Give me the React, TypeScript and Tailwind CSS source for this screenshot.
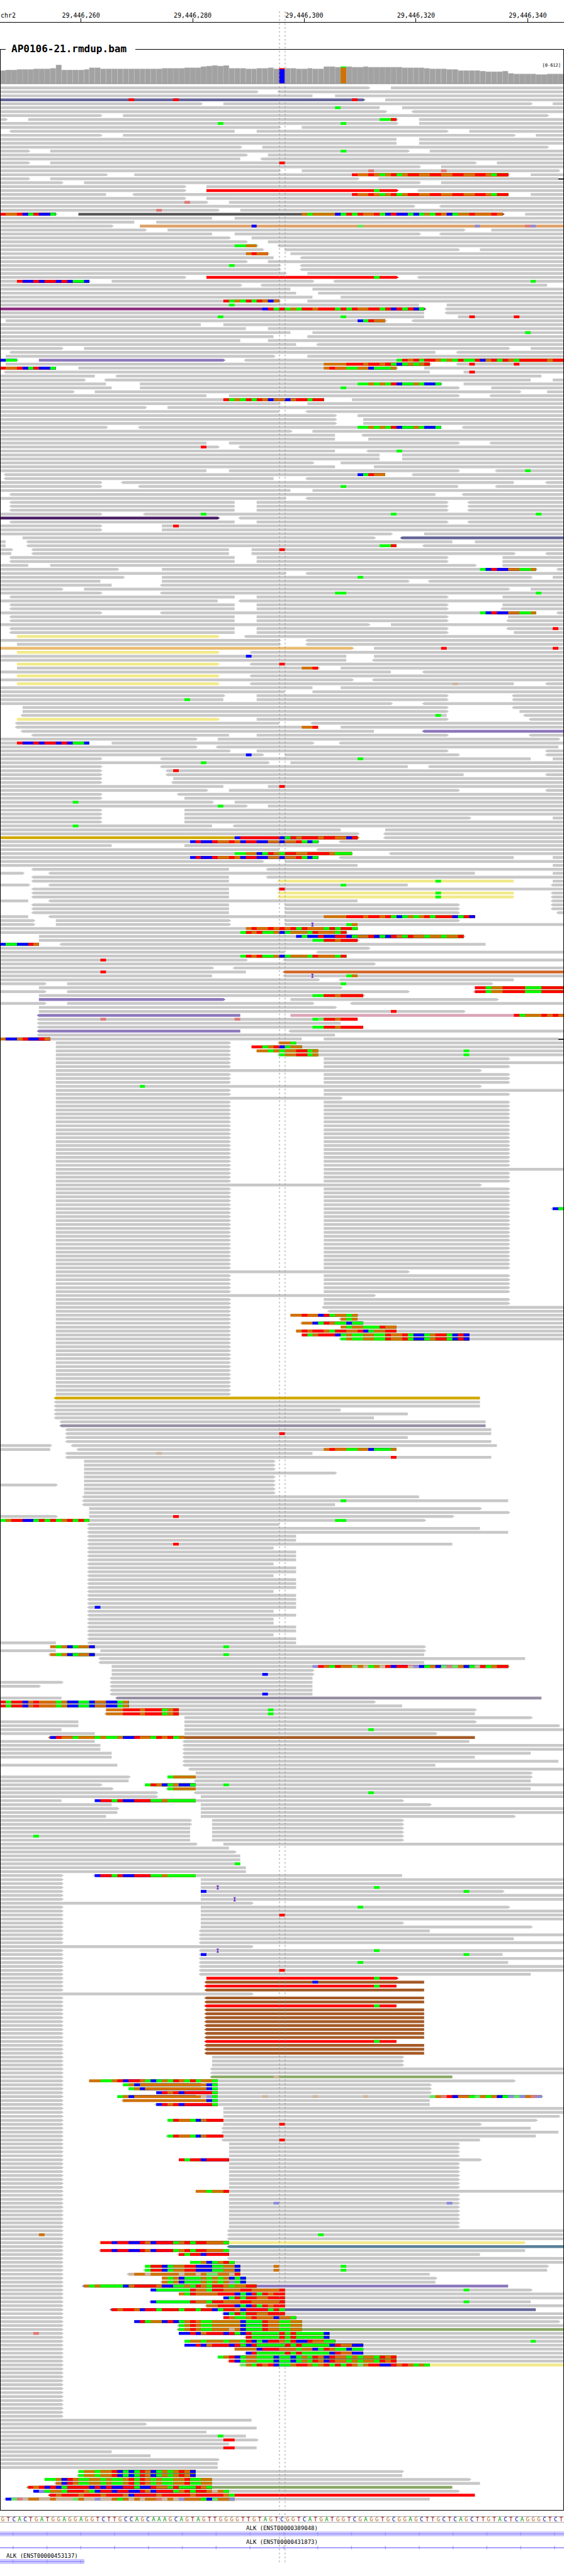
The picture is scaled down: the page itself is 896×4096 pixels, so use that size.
import React from "react";

const COLUMNS = 101;
const VIEW_WIDTH = 1000;
const CELL = VIEW_WIDTH / COLUMNS;
const ROW_PITCH = 7;
const ROW_HEIGHT = 5;
const FIRST_ROW_Y = 154;

const at = (col: number) =>
  Math.min(Math.max(Math.round(col * CELL), 1.2), VIEW_WIDTH - 1.2);

/*
 * One line per alignment row. A line may start with "N*" to repeat it.
 *   <a-b>X   read from column a to b, arrow marks for strand, X = colour key
 *   12rgbo   mismatching bases from column 12 on (capitals: low quality)
 *   i12      insertion before column 12
 *   d12      deletion at column 12
 */
const PILEUP = `
-66> 70-
-46> <50-
-56 60-
-65>S 23r 31r 63r 69-
-36> 40-95> 99-
-68 60g 72-
-69> <74-
-18> 22-98>
-1> 5-71> 68ggr 75-
-71> 39g 61g 75-
-50> 54-
<2-42 46-80> 84-
-18> 22-92> 96-
2* -71 75-
-43> 47-98>
-5> 9-73> 61g 77-
-44> 48-
-43 <47-
-5> 9-85> 50r 89-
-75> 79-
-50> 54-100> 66R 79R
-19> 24-91> 63roorogorgorroorroorroorrogrr 95-
-5> 9-64> <68-100 d100
-11> 15-75> 79-
-33> 37-
-33> 37-71>R 67g <75-
-19 <24-91 63roorogorgorroorroorroorrogrr 95-
-33> 37-
-37> 33R 41-
-74> <79-
-39> 28R 43-
-10> 0roorbgrbbg 14-90>K 54ogoooobgrgroorgbrbbgbgogrobgooroooro 94-
-38 42-
-24 28-
-20> 25-T 45b 64G 85B 94R 95B
-26> 30-83> 88-
-38 42-75> <79-
-41> 45-
-44> 48-
-46> 42ggoo <50-
-47> 51-82> 86-
-48> 44oroo 52-
-49 <54-
-44> 48-
-50> 41g <54-
-50> <54-
-51> 55-
-33> 37-71>R 67g <75-
-16> 3rbbrbrrbrbggb 20-56> <60- 95g
-43> <47-98
-52 56-
-53 57-
-56 61-
-50> 40rgogrgrobo 55-
-75 41g 80-
-76>P 47brgrgogrrorrrgrgroorrgrbrgrbg <80-
-76 <80-
-76 39g 61g 82- 84r 92r
1-69> 64bgroo <74-
-36 40-
-44 48-
-52 56- 94g
-49 55-
-43 48-
-53 <57-
-11> 15-91> 95-
<2-78 <82-
1-49> 55-
-3> 0bgg 7-40>V <44- 71grorgrrogogrggrborgrogrrrrrorr
1-77> 58oooorrrorrorgbgogor <82- 84r 92r
-10 0roorbgrbbg 14-71> 58orooggoobgggo 76-
<1-77 83- 84r
-17 <21-97
-15> <19-95 99-
-19 25-79> 64ggogogrbggogbbg 83-
-20 25-82> 61g 88-
-13> 17-93> 98-
-37 41-82> <88-
-58 40rgogrgrobooborrgrr 63-
-50> 55-
-26> 30-
-50 <55-
-60> 64-
2* -60> 65-
-19> <25-79 64ggogogrbggogbbg <83-
-52> 56-
-60 <65-
-60 66-
-37 41-82> <88-
-39> 36r <43-
-60 <66- 71g
2* -68 72-
-56> 61-
-60 67-
-37 41-82> <89- 94g
<1-69 64bgroo <74-
<1-49 <55-
-18> <22-92 <98-
-18> <25-82 61g <89-
-52 56-
<2-78 <83-
-51> <55-
3* <2-42 46-80> <84-
-18> <26- 36g 70g 96g
-39>D <43-
<2-42 46-80> <84-
-18> 29- 31r
-18> 29-
-70> 76-
4-67> <72-S
-1 <5-81 85-
-1 <5-71 68ggr <76-
-2> <6-41 45- 50r
-2 <6-41 45-92> <98-
2* <2-42 46-80> 90-
-5 9-85> 90-
-21> 29-96> 86gbrbbooggo <100-
-51> <55-
-22> 29-95> 64g 99-
-18 29-73> <77-
-20 <29-
-11> 15-91> 95-
-18> <29- 60gg 96g
<2-42 46-80> 90-
-39 <43-
<2-42 46-80> 90-
<2-42 46-80> <90-
-18> <29-96 86gbrbbooggo <100-
<2-42 46-80> 91-
<2-42 46-80> <91-
-66> 70-
<2-42 46-80> <91- 99r
<2-42 46-80> 92-
3-39>Y <44-
-50> <55-
3-50> <55-
-63>L 67- 79r 99r
3-39>Y <45-
-62 44b 67-
-62 <67-
3-39>Y <45- 50r
3-57> 54oor 61-
-70 <76-
3-39>Y <45-
-63> <67-
3-39>Y <45-92 81O <98-
-56 61-
-51 56-
-40> 46-80> <92-
-40 33g 46-80> <92-
-70> <76-
4-80> <92-
4-80> 93-
<4-80 78g <94-
3-39>Y 46-80> <95-
<3-50 <56-
<3-57 54oor 61-
<4-67 <76-V
<6-41 46-80> <95-
-35> 39-100>
-16 3rbbrbrrbrbggb 20-56> <61-
-35> <39-100
-41> 46-80> <98-
-47> 44b 51-82> <98-
-18> <29-95 64g 99-
-48> 36g 52-
-18> <29-73 <77-
-18> <30- 31r
-18> <30-83 <98-
-18> 31-
-18> <31-
-40 48- 50r
-37> 41-82> <98-
-18> <32-
-18> 33-
-38> 13g 42-
-44> 39g 48-
2* -18> 33-
-18> 33-84> 99-
-18> 33-
-38 13g <42-
-61 69-
-64> <69-
-64>N 42brrrrrrrbgrorrrorroobr <69-
-57> 34brbbroorobrrbbooboorgbg <61-
-20 33-
-50 <57-
-63 42ggoobgrogrroorrrroggg <70-
-57 34brbbroorobrrbbooboorgbg <61-92 99-
-47> 51-
-64 99-
<6-41 <48-
-4> <9-85 99-
<6-41 <48-
<6-41 <50-92Y 78g 99-
-5> <9-73 61g <99-
<6-41 <50- 50r
2* <6-41 <50-92Y 78g <99-
-5 <9-64 <99-
2* <6-41 51-82> <99-
<6-41 51-82> <100-
-5 <9-85 58oooorrrorrorgbgogorgrrrbgrb
-6> 10-41> 51-82>
-6> 10-41> 51- i56 62go
-64 44oroorororgrooogrgrrg
-62> 43grorggobgooogrooogr
7-83> 53bgbbrbbrrbgoorbgbrogroogoogoor
7-64> 56ggrrorrr
-7 0bggbbro <11-87
-66>
-51 <57-
-62 43grorggobgooogrooogr
-44> 18r <51-
-67>
-38> <42-
-44 18r <51-C
-38 <51- i56 62go
-57> <61-92
-8> 12-88> 61g
7-61> 85- 85rrgoorrrrgggrrrr
-8> 12-73> <85- 85rrgoorrrrgggrrrr
7-65> 56ggrrorrrr
7-40>V 52-89>
-8> 12-56> <63-
7-60>
7-83> 70r
<7-43V 52-I 92rgooororo
<7-64 18R 42R 56gGrrorrr
<7-61
<7-65 56ggrrorrrr
<7-43V <52-
<7-60
-54 0obborbbro 58-100 d100
10-41> <50- 50oog
10-41> 45- 45rrgorbgoo
10-41> 46- 46oogogoorrgo 83g
10-41> <50- 50goorrgo 83g
10-41> 58-91>
10-41> 58-
10-41> 58-91>
10-86>
3* 10-41> 58-91>
10-86> 25g
10-41> 58-
10-41> 58-91>
10-61>
17* 10-41> 58-91>
10-41> 58-
3* 10-41> 58-91>
10-86>
5* 10-41> 58-91>
10-41> 58-91> <99- 99bg
15* 10-41> 58-91>
10-73>
5* 10-41> 58-91>
10-67>
2* 10-41> 58-91>
10-41> <58-
10-41> <59-
10-41> 52- 52ooroobrgoogo
10-41> <61- 61ogo
10-41> <54- 54oobgroggbgg
10-41> 61- 61ogoogggroo
10-41> 53- 53ororrogrroorbgoorr
10-41> 54- 54rgorrrbgoggooggroorgbbgorrgbrb
10-41> <61- 61goggooggroorgbbgorrgbrb
14* 10-41>
<10-86N
2* <10-86
<10-61
<10-73
<10-67
<11-87
<11-87M
<12-88
<12-88 50r
<12-73
<12-88
-9> <13-89
-9 <14-71 58orooggoobgggo
<12-56 28O
<12-88 70r
3* 15-49>
15-60>
2* 15-49>
-10> 15-49>
2* 15-49>
<15-75
<15-91 61g
<15-60
16-86>
16-91>
-10> 16-81> 31r
-76> 0gorrbbgrgrgorgrg 60gg
<16-50
<16-86
<16-91
2* <16-53
<16-81 31r
<16-49
3* <16-53
<16-49
2* <16-53
<16-49
3* <16-53
<16-49
3* <16-53
<16-53 17b
<16-49
<16-53
2* <16-49
2* <16-53
<16-49
<16-53
-10 <16-53
9-76> 9ogobgoob 40g
-10 18-76>
<9-76 9ogobgoob 40g
<18-94
<18-76
20-91> 56BrogrooGoOgoOrbrrOBbgobGRGobgOrgorr
20-56>
20-56> 47b
<20-56
-11> <20-56
-7> <20-56
<20-56
<20-56 47b
-11 <21-97M
-67> 0rgrrborooogobbggboobbgo
-72 0rgrrborooogobbggboobbgo
19-85> 19ooorrrorrrgor 48g
<19-85 19ooorrrorrrgor 48g
33-95>
-14 33-85>
-14 33-100>
-11 33- 66g
-17 33-78>
<9-85W 9broogooogoggobbroogrorgo
-17 <33-84
2* -18 <33-
-20 <33-95
-20 <33-85
<33-100
-21 <33-78
<34-
35-95>
-23> 30-95> 30goooo
-23 <35-95
-18> 26- 26grobgobbg 40g
-20> <30-95 30goooo
-28> <35- 66g
-28> 36-
-11 17-72> 17brrgrbbrrrggoggggg
-20 36-77>
-21> 36-
-21 36-
-19 36-92>
2* -34> 38-72>
2* -34 38-72>
-34 6g 38-72>
-34 38-72>
-35> 40-
-41
-42>
2* -43
-43 42g
2* -44
-11> <17-72 17brrgrbbrrrggoggggg
2* -11> 36-
-11> 36- i39 67g
-11> 36-90> 36b 83g
-11> 36-
-11> 36- i42
-45>
-11> 36-91> 64g
-11> 36-
-11> 36- 50r
-11> 36-
-11> 36-72>
-11> 36-95>
-11> <36-77
-11> <36-
-11> <36-92
-11> <36-
-45>
-11> <36- i39 67g
-11> <36-90 36b 83g
-11> <36-
-11> <36-91 64g
-11> <36-
-11> <36- 50r
-11> <36-95
-11> 37-71>R 67g
-11> <37-76W 56b
-11> <37-71R 67g
-11> <37-76W
-45>
2* -11> <37-76W
-11> <37-71R 67g
8* -11> <37-76W
-11> <37-71R 67g
3* -11> <37-76W
3* -11> 38-72>
2* -11> <38-
-11> <38-81E 49O
-11> 16-92> 16ooggorbrrogbgogrogrgoog
-11> 22-77> 22gobooooooooooo 36obg
-11> 23-77> 23gobooooooooooo 37bg
-11> 28-77> 28brorbrrrrrg
-11> 21-97> 21gobooooooooooo 35oOBg 47O 56O 65O 77GoRrboogGogobgBGBoRB
-11> <22-77 22ooooooooooooooobg
-11> <28-77 28brorbrrrrrg
2* -11> 40-
-11> 40-100>
-11> 30-96> 30groogborrr
-11> 40-86> 50r
-11> <40-95
-11> <40-100
-11> <30-96 30groogborrr
-11> <40-86 50r
4* -11> 41-82>
-11> 32-86> 32rgrrbrrrr
7* -11> 41-82>
-11> 35- 35oogoor
2* -11> 41-82>
-11> 41-82> 49B 80B
6* -11> 41-82>
-11> <41-
-11> 7o <41- 57g
-11> <41-
-11> <18-94Y 18rrbrrbbrobrrrgorgrrooog
-11> <41-Z
-11> <18-94 18rrbrrbbrobrrrgorgrrooog
-11> <32-86 32rgrrbrrrr
-11> <41-
-11> 34- 34ggobgorg
-11> 26-98> 26grrbgoorrbbbggoob 49o 61g
-11> <26-98 26grrbgoorrbbbggoob 49o 61g
-11> <23-77 23OooOoooooOooOoGGooOr
-11> 29-78> 29ogobgggogogobgb
-11> <29-78 29ogobgggogogoBgb
-11> <15-91V 15ogoggggborrrrobbggogrogrrogoorr
-11> 27-95> 27bggggggroogrrooorrooooor 83g
-11> 32- 32ogroooorrrbgbrgrorr
-11> 40- 40bgrgrroorrr
-11> <27-95 27bggggggroogrrooorrooooor 83g
-11> <37- 37oorrrbgbrgrorr
-11> <20-96S 20rorrobrrgrrrgrrgrrbgrrobrrrrgrg
-11> <40- 40bgrgrroorrr
-11> 40- 40roggoroooboog
-11> 24-100> 24brgoobrbgoroggooooobgggrooggoo
-11> <32- 32goroggooooobgggrooggoo
-11> <32-E 32goroggoooOobgggrooggoo
-11> 6R 32- 32bbrborrrbrgbrgggggrgrgggggb
-11> <44- 44rgggggrgrgggggb
-11> 33- 33googooogoogrbgbrrogrbbroogg 95g
-11> 33- 33bbrborrrbrgbrgggggrgrgggggbroobb
-11> 42- 42oooobrrrooogoobgroggbgg
-11> <44- 44brgggggrgrgggggbroobb
-11> 39- 39gorbgoogggbggbgogrobroogogoogror
-11> <41- 41rbgoogggbggbgogrobroogogoogror
-11> <43-Y 43GogrorbggorrogorgrgroGorrbbrorogog
13* -11>
-45
-26>
-46
-37
-44 39g
-46> 40rr
-41
-46 40rr
-20
-27
-39>
2* -39
14-72> 14googoorbgbgrobgogorob
<14-72 14googoorbgbgrobgogorob
8-84> 8ggobroggoogoggorgrogoggoorggoo
<10-86 10obroggoogoggorgrogoggoorggoo
<5-81E 5rorbrbgrrrrbrbrbbrrgbbroogrgggrog
6-82> 6bBgoogrrrogbrrbrrbbrobrrrgorgrroOog
<9-85R 9rorrrorrrorrrobrrrrorrrrrorrrrrog
<1-77 1bGROooOOoOOOGoOOBOOogoOoOooROoOBooogbGooB
`;

const READ_COLORS: Record<string, string> = {
  "": "#c8c8c8",
  S: "#646699",
  R: "#ff0000",
  K: "#555555",
  T: "#dda066",
  P: "#8f2d80",
  V: "#8c77bb",
  D: "#4b2066",
  Y: "#f2ea8a",
  L: "#e8bb72",
  N: "#d2a900",
  C: "#d16627",
  I: "#dba3b5",
  M: "#968ea3",
  W: "#a55a26",
  E: "#88a864",
  Z: "#5a809a",
};

const BASE_COLORS: Record<string, string> = {
  r: "#ff0000",
  g: "#00ff00",
  b: "#0000ff",
  o: "#d17105",
  R: "#e07878",
  G: "#64e664",
  B: "#8c8cdc",
  O: "#ccb6a0",
};

const rows: string[][] = PILEUP.trim()
  .split("\n")
  .flatMap((line) => {
    const m = line.match(/^(\d+)\* (.*)$/);
    const tokens = (m ? m[2] : line).split(" ");
    return Array.from({ length: m ? Number(m[1]) : 1 }, () => tokens);
  });

function Read({ token, y }: { token: string; y: number }) {
  const m = token.match(/^(<?)(\d*)-(\d*)(>?)([A-Z]?)$/);
  if (!m) return null;
  const x1 = at(m[2] === "" ? 0 : Number(m[2]));
  const x2 = at(m[3] === "" ? COLUMNS : Number(m[3]));
  const left = m[1] ? `L${x1 - 4} ${y + ROW_HEIGHT / 2}` : "";
  const right = m[4] ? `L${x2 + 4} ${y + ROW_HEIGHT / 2}` : "";
  const bottom = y + ROW_HEIGHT;
  return (
    <path
      d={`M${x1} ${y}H${x2}${right}L${x2} ${bottom}H${x1}${left}Z`}
      fill={READ_COLORS[m[5]]}
    />
  );
}

function Bases({ token, y }: { token: string; y: number }) {
  const m = token.match(/^(\d+)([a-zA-Z]+)$/);
  if (!m) return null;
  const start = Number(m[1]);
  const end = at(start + m[2].length);
  return (
    <>
      {m[2].split("").map((base, i, all) =>
        i > 0 && all[i - 1] === base ? null : (
          <rect
            key={i}
            x={at(start + i)}
            y={y}
            width={end - at(start + i)}
            height={ROW_HEIGHT}
            fill={BASE_COLORS[base]}
          />
        )
      )}
    </>
  );
}

function Mark({ token, y }: { token: string; y: number }) {
  const x = at(Number(token.slice(1)));
  if (token[0] === "d") {
    return <rect x={x} y={y + 2} width={10} height={2} fill="#000" />;
  }
  return (
    <path
      d={`M${x - 2} ${y - 1}h4v1.6h-1.2v3.8h1.2v1.6h-4v-1.6h1.2v-3.8h-1.2z`}
      fill="#6a22cc"
    />
  );
}

function Alignments() {
  return (
    <svg
      viewBox="0 150 1000 4302"
      preserveAspectRatio="none"
      className="block aspect-[1000/4304] w-full"
      role="img"
      aria-label="Read alignments"
    >
      {rows.map((tokens, i) => {
        const y = FIRST_ROW_Y + i * ROW_PITCH;
        return (
          <g key={i}>
            {tokens.map((t, k) => (t.includes("-") ? <Read key={k} token={t} y={y} /> : null))}
            {tokens.map((t, k) => (/^\d+[a-zA-Z]+$/.test(t) ? <Bases key={k} token={t} y={y} /> : null))}
            {tokens.map((t, k) => (/^[id]\d+$/.test(t) ? <Mark key={k} token={t} y={y} /> : null))}
          </g>
        );
      })}
    </svg>
  );
}

/* [number of columns, top of the bar] */
const COVERAGE_RUNS: [number, number][] = [
  [1, 125], [2, 124], [3, 123], [3, 122], [1, 121], [1, 115], [4, 124], [1, 123],
  [2, 120], [11, 122], [4, 121], [3, 120], [1, 118], [1, 117], [1, 116], [1, 117],
  [1, 116], [3, 121], [2, 122], [2, 121], [1, 120], [1, 122], [1, 121], [2, 121],
  [2, 122], [1, 121], [2, 122], [2, 118], [1, 119], [1, 118], [1, 118], [2, 119],
  [1, 118], [6, 119], [4, 120], [1, 121], [3, 122], [2, 123], [4, 125], [1, 126],
  [3, 127], [1, 126], [1, 130], [4, 131], [2, 132], [3, 131],
];
const coverage = COVERAGE_RUNS.flatMap(([n, top]) => Array.from({ length: n }, () => top));
const VARIANTS: Record<number, [string, string]> = {
  50: ["#ff0000", "#0000ff"],
  61: ["#00ff00", "#d17105"],
};

function Coverage() {
  return (
    <svg viewBox="0 100.5 1000 49.5" className="block w-full" role="img" aria-label="Coverage">
      {coverage.map((top, i) => {
        const x = at(i);
        const w = at(i + 1) - x;
        const v = VARIANTS[i];
        return (
          <g key={i}>
            <rect x={x} y={top} width={w} height={148 - top} fill={v ? v[0] : "#b4b4b4"} />
            <rect
              x={v ? x : x + 0.5}
              y={top + (v ? 2 : 1)}
              width={v ? w : w - 1}
              height={147 - top - (v ? 1 : 0)}
              fill={v ? v[1] : "#a2a2a2"}
            />
          </g>
        );
      })}
      <rect x={1} y={148} width={998} height={1} fill="#707070" />
    </svg>
  );
}

function Ruler() {
  const label =
    "col-span-13 flex flex-col items-center after:h-[6px] after:w-px after:bg-black after:content-['']";
  return (
    <header className="grid grid-cols-[repeat(101,minmax(0,1fr))] border-b border-black pt-[20px] text-[10px] leading-[9px] whitespace-nowrap">
      <span className="col-span-8 pl-px">chr2</span>
      <span className={label}>29,446,260</span>
      <span className={`${label} col-start-29`}>29,446,280</span>
      <span className={`${label} col-start-49`}>29,446,300</span>
      <span className={`${label} col-start-69`}>29,446,320</span>
      <span className={`${label} col-start-89`}>29,446,340</span>
    </header>
  );
}

const SEQUENCE =
  "GTCACTGATGGAGGAGGTCTTGCCAGCAAAGCAGTAGTTGGGGTTGTAGTCGGTCATGATGGTCGAGGTGCGGAGCTTGCTCAGCTTGTACTCAGGGCTCT";
const LETTER_CLASS: Record<string, string> = {
  A: "text-[#009600]",
  C: "text-[#000096]",
  G: "text-[#b86a1c]",
  T: "text-[#a00000]",
};

function Reference() {
  return (
    <div className="mt-[9px] grid grid-cols-[repeat(101,minmax(0,1fr))] border-y border-[#a8a8a8] text-center text-[9px] leading-[8px]">
      {SEQUENCE.split("").map((base, i) => (
        <span key={i} className={LETTER_CLASS[base]}>
          {base}
        </span>
      ))}
    </div>
  );
}

function Transcript({ name, label, track }: { name: string; label: string; track: string }) {
  return (
    <div className="pt-[5px]">
      <p className={`text-[9px] leading-[9px] ${label}`}>{name}</p>
      <div className={`overflow-hidden ${track}`}>
        <svg viewBox="0 0 1000 9" preserveAspectRatio="xMinYMid slice" className="block h-[8px] w-screen">
          <rect x={0} y={3.6} width={1000} height={2} fill="#9b97ff" />
          {Array.from({ length: 17 }, (_, k) => (
            <path key={k} d={`M${24 + k * 60} 1l-3 3.6l3 3.6z`} fill="#9b97ff" />
          ))}
        </svg>
      </div>
    </div>
  );
}

export default function App() {
  return (
    <main className="relative min-h-screen overflow-hidden bg-white font-['DejaVu_Sans_Mono','Liberation_Mono',monospace] text-black">
      <Ruler />
      <fieldset className="mt-[30px] min-w-0 border border-black">
        <legend className="ml-[8px] pr-[14px] pl-[9px] text-[16px] leading-[24px] font-bold">
          AP0106-21.rmdup.bam
        </legend>
        <div className="relative -mx-px">
          <span className="absolute top-[9px] right-[5px] text-[7px] leading-[10px]">[0-612]</span>
          <Coverage />
          <Alignments />
        </div>
      </fieldset>
      <Reference />
      <Transcript name="ALK (ENST00000389048)" label="text-center" track="bg-[#d0cbff]" />
      <Transcript name="ALK (ENST00000431873)" label="text-center" track="bg-white" />
      <Transcript name="ALK (ENST00000453137)" label="pl-[10px]" track="w-[14.9%] bg-[#d0cbff]" />
      <svg
        viewBox="0 0 1000 4546"
        preserveAspectRatio="none"
        className="pointer-events-none absolute top-0 left-0 aspect-[1000/4548] w-full"
        aria-hidden="true"
      >
        <path d="M495.5 20V4545" stroke="#8c8c8c" strokeWidth={1} strokeDasharray="3 4" />
        <path d="M505.5 20V4545" stroke="#8c8c8c" strokeWidth={1} strokeDasharray="3 4" />
      </svg>
    </main>
  );
}
